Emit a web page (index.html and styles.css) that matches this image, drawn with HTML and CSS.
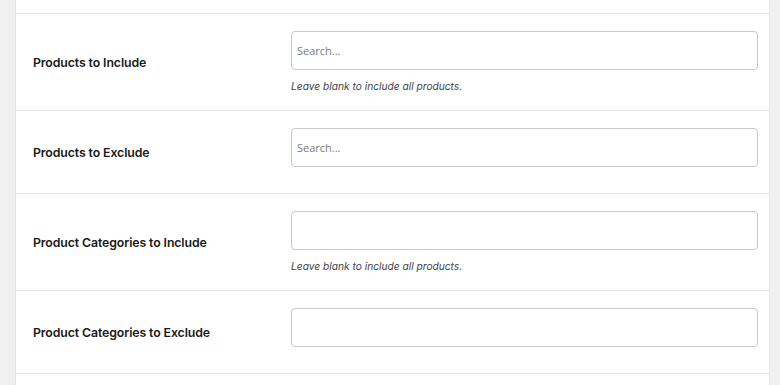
FILE: index.html
```html
<!DOCTYPE html>
<html lang="en">
<head>
  <meta charset="UTF-8">
  <title>Coupon Restrictions</title>
  <link rel="stylesheet" href="styles.css">
</head>
<body>
  <div class="panel">
    <div class="row row-stub"></div>

    <div class="row">
      <div class="label">Products to Include</div>
      <div class="field">
        <input type="text" class="input" placeholder="Search...">
        <p class="description">Leave blank to include all products.</p>
      </div>
    </div>

    <div class="row">
      <div class="label">Products to Exclude</div>
      <div class="field">
        <input type="text" class="input" placeholder="Search...">
      </div>
    </div>

    <div class="row">
      <div class="label">Product Categories to Include</div>
      <div class="field">
        <input type="text" class="input">
        <p class="description">Leave blank to include all products.</p>
      </div>
    </div>

    <div class="row">
      <div class="label">Product Categories to Exclude</div>
      <div class="field">
        <input type="text" class="input">
      </div>
    </div>

    <div class="row row-stub"></div>
  </div>
</body>
</html>
```

FILE: styles.css
```css
* {
  margin: 0;
  padding: 0;
  box-sizing: border-box;
}

body {
  background: #f0f0f1;
  font-family: 'Inter', 'Liberation Sans', sans-serif;
  color: #1d2327;
  overflow: hidden;
}

.panel {
  margin-left: 15px;
  width: 755px;
  background: #fff;
  border-left: 1px solid #e2e4e7;
  border-right: 1px solid #e8e8ea;
  min-height: 385px;
}

.row {
  display: flex;
  align-items: center;
  border-bottom: 1px solid #e5e5e5;
}

.row-stub {
  height: 14px;
}

.label {
  width: 275px;
  padding-left: 17px;
  padding-top: 1px;
  font-size: 12.3px;
  font-weight: 600;
  color: #1a1a1a;
  letter-spacing: -0.1px;
}

.field {
  padding: 17px 0 17px;
}

.input {
  display: block;
  width: 467px;
  height: 39px;
  margin-bottom: 9px;
  padding: 0 5px;
  border: 1px solid #c9c9cb;
  border-radius: 4px;
  background: #fff;
  font-family: 'Open Sans', 'Noto Sans', sans-serif;
  font-size: 11px;
  color: #3c434a;
  outline: none;
}

.input::placeholder {
  color: #787c82;
}

.description {
  font-size: 10.2px;
  font-style: italic;
  line-height: 15px;
  margin-bottom: -1px;
  color: #3c434a;
}
```
